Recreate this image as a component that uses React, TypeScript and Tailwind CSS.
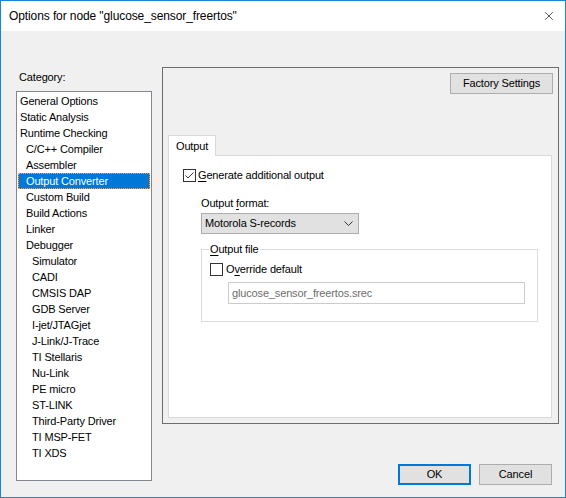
import { X } from 'lucide-react';

const CATEGORIES: { label: string; level: number }[] = [
  { label: 'General Options', level: 0 },
  { label: 'Static Analysis', level: 0 },
  { label: 'Runtime Checking', level: 0 },
  { label: 'C/C++ Compiler', level: 1 },
  { label: 'Assembler', level: 1 },
  { label: 'Output Converter', level: 1 },
  { label: 'Custom Build', level: 1 },
  { label: 'Build Actions', level: 1 },
  { label: 'Linker', level: 1 },
  { label: 'Debugger', level: 1 },
  { label: 'Simulator', level: 2 },
  { label: 'CADI', level: 2 },
  { label: 'CMSIS DAP', level: 2 },
  { label: 'GDB Server', level: 2 },
  { label: 'I-jet/JTAGjet', level: 2 },
  { label: 'J-Link/J-Trace', level: 2 },
  { label: 'TI Stellaris', level: 2 },
  { label: 'Nu-Link', level: 2 },
  { label: 'PE micro', level: 2 },
  { label: 'ST-LINK', level: 2 },
  { label: 'Third-Party Driver', level: 2 },
  { label: 'TI MSP-FET', level: 2 },
  { label: 'TI XDS', level: 2 },
];

const INDENT = ['pl-[2px]', 'pl-[8px]', 'pl-[14px]'];

function CheckBox({ checked }: { checked: boolean }) {
  return (
    <span className="flex h-[13px] w-[13px] shrink-0 items-center justify-center border border-[#333333] bg-white">
      {checked && (
        <svg width="11" height="11" viewBox="0 0 11 11">
          <polyline points="1.5,5.5 4,8 9.5,2.5" fill="none" stroke="#333333" strokeWidth="1" />
        </svg>
      )}
    </span>
  );
}

function WinButton({ children, focused = false, width }: { children: React.ReactNode; focused?: boolean; width: string }) {
  return (
    <button
      type="button"
      className={[
        'flex h-[21px] items-center justify-center bg-[#e1e1e1] text-black',
        width,
        focused ? 'border-2 border-[#0078d7]' : 'border border-[#adadad]',
      ].join(' ')}
    >
      {children}
    </button>
  );
}

export default function App() {
  return (
    <div className="flex h-[498px] w-[566px] flex-col border border-[#1883d7] bg-[#f0f0f0] font-['Liberation_Sans',Arial,sans-serif] text-[11px] tracking-[-0.15px] text-black">
      {/* title bar */}
      <div className="flex h-[30px] shrink-0 items-center justify-between bg-white pl-[8px] pr-[9px]">
        <span className="text-[12px] tracking-[-0.1px]">Options for node "glucose_sensor_freertos"</span>
        <X size={14} strokeWidth={1.1} className="text-black" />
      </div>

      <div className="flex flex-1">
        {/* category list */}
        <div className="ml-[15px] flex flex-col pt-[39px]">
          <span className="h-[14px] leading-[14px] pl-[3px]">Category:</span>
          <div className="mt-[7px] h-[390px] w-[136px] border border-[#828790] bg-white p-[1px]">
            {CATEGORIES.map((c) => {
              const selected = c.label === 'Output Converter';
              return (
                <div
                  key={c.label}
                  className={[
                    'flex h-[16px] items-center leading-[16px]',
                    INDENT[c.level],
                    selected ? 'border border-dotted border-[#f7a35c] bg-[#0078d7] text-white' : '',
                  ].join(' ')}
                >
                  <span className={selected ? '-ml-px' : ''}>{c.label}</span>
                </div>
              );
            })}
          </div>
        </div>

        {/* settings */}
        <div className="ml-[10px] flex flex-col">
          <div className="mt-[36px] flex h-[357px] w-[397px] flex-col border border-[#6d6d6d] px-[5px] pb-[5px] pt-[5px]">
            <div className="flex justify-end">
              <WinButton width="w-[103px]">Factory Settings</WinButton>
            </div>

            <div className="mt-[41px] flex flex-1 flex-col pr-px">
              <div className="relative z-10 -mb-px flex h-[21px] w-[48px] items-center border border-b-0 border-[#d9d9d9] bg-white pl-[7px]">
                Output
              </div>
              <div className="flex flex-1 flex-col border border-[#d9d9d9] bg-white">
                <label className="ml-[14px] mt-[13px] flex h-[13px] items-center gap-[2px]">
                  <CheckBox checked />
                  <span>
                    <span className="underline underline-offset-2">G</span>enerate additional output
                  </span>
                </label>

                <div className="ml-[32px] flex flex-col">
                  <span className="mt-[14px] h-[14px] leading-[14px]">
                    Output <span className="underline underline-offset-2">f</span>ormat:
                  </span>
                  <div className="mt-[3px] flex h-[21px] w-[158px] items-center justify-between border border-[#adadad] bg-[#e1e1e1] pl-[3px] pr-[5px]">
                    <span>Motorola S-records</span>
                    <svg width="9" height="6" viewBox="0 0 9 6">
                      <polyline points="0.5,0.5 4.5,4.5 8.5,0.5" fill="none" stroke="#333333" strokeWidth="1" />
                    </svg>
                  </div>

                  <div className="relative mt-[15px] flex h-[73px] w-[337px] flex-col border border-[#dcdcdc] pl-[8px]">
                    <span className="absolute left-[7px] top-[-8px] bg-white px-px leading-[14px]">
                      <span className="underline underline-offset-2">O</span>utput file
                    </span>
                    <label className="mt-[13px] flex h-[13px] items-center gap-[3px]">
                      <CheckBox checked={false} />
                      <span>
                        O<span className="underline underline-offset-2">v</span>erride default
                      </span>
                    </label>
                    <div className="ml-[18px] mt-[6px] flex h-[22px] w-[297px] items-center border border-[#cccccc] bg-white pl-[3px] text-[#6d6d6d]">
                      glucose_sensor_freertos.srec
                    </div>
                  </div>
                </div>
              </div>
            </div>
          </div>

          <div className="mr-[7px] mt-[40px] flex justify-end gap-[8px]">
            <WinButton width="w-[73px]" focused>
              OK
            </WinButton>
            <WinButton width="w-[73px]">Cancel</WinButton>
          </div>
        </div>
      </div>
    </div>
  );
}
